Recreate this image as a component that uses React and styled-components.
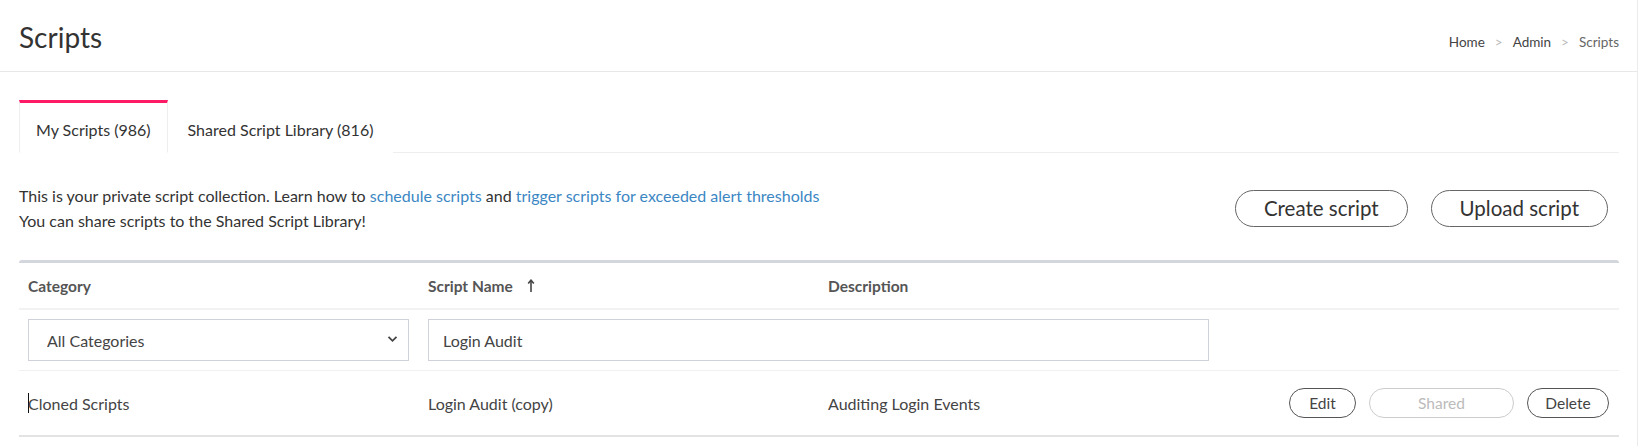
import React from 'react';
import styled, { createGlobalStyle } from 'styled-components';

const GlobalStyle = createGlobalStyle`
  body {
    margin: 0;
    background: #fff;
    font-family: Lato, "Open Sans", Arial, sans-serif;
    color: #333;
  }
`;

const Page = styled.div`
  width: 1637px;
  min-height: 446px;
  border-right: 1px solid #ececec;
`;

const Header = styled.header`
  height: 72px;
  display: flex;
  align-items: center;
  justify-content: space-between;
  padding: 0 18px 0 19px;
  border-bottom: 1px solid #e8e8e8;
  box-sizing: border-box;
`;

const Title = styled.h1`
  margin: 0;
  font-size: 28px;
  font-weight: 400;
  color: #333;
  padding-top: 3px;
`;

const Breadcrumb = styled.nav`
  display: flex;
  align-items: center;
  font-size: 13.5px;
  color: #444;
  padding-top: 12px;
`;

const Crumb = styled.span`
  color: ${(p) => (p.$current ? '#666' : '#444')};
`;

const Sep = styled.span`
  color: #bbb;
  margin: 0 10px;
`;

const Content = styled.main`
  padding: 28px 18px 0 19px;
`;

const TabBar = styled.div`
  display: flex;
  align-items: flex-end;
  border-bottom: 1px solid #eee;
`;

const Tab = styled.button`
  height: 53px;
  box-sizing: border-box;
  padding: 4px ${(p) => (p.$active ? '16px' : '19px')} 0;
  margin-bottom: -1px;
  border: 1px solid ${(p) => (p.$active ? '#eee' : 'transparent')};
  border-top: 3px solid ${(p) => (p.$active ? '#ff1a66' : 'transparent')};
  border-bottom: 1px solid ${(p) => (p.$active ? '#fff' : 'transparent')};
  background: #fff;
  font-family: inherit;
  font-size: 16px;
  color: #333;
  cursor: pointer;
`;

const Intro = styled.div`
  display: flex;
  align-items: center;
  justify-content: space-between;
  padding: 30px 11px 27px 0;
`;

const IntroText = styled.p`
  margin: 0;
  font-size: 16px;
  line-height: 25px;
  color: #333;
`;

const Link = styled.a`
  color: #3b87c4;
  text-decoration: none;
`;

const Toolbar = styled.div`
  display: flex;
  gap: 23px;
`;

const PillButton = styled.button`
  height: 37px;
  padding: 0 28px;
  border: 1px solid #666;
  border-radius: 19px;
  background: #fff;
  font-family: inherit;
  font-size: 20.5px;
  color: #333;
  cursor: pointer;
`;

const Table = styled.div`
  border-top: 3px solid #d3d6dd;
  border-radius: 3px 3px 0 0;
`;

const Row = styled.div`
  display: grid;
  grid-template-columns: repeat(4, 1fr);
  align-items: center;
  height: ${(p) => p.$h}px;
  border-bottom: ${(p) => p.$border};
`;

const HeadCell = styled.div`
  padding: 0 10px 0 9px;
  font-size: 15.5px;
  font-weight: 700;
  color: #555;
  display: flex;
  align-items: center;
  gap: 14px;
`;

const Cell = styled.div`
  padding: 0 10px 0 9px;
  font-size: 16px;
  color: #444;
  grid-column: ${(p) => p.$span || 'auto'};
  display: flex;
  align-items: center;
`;

const Actions = styled(Cell)`
  justify-content: flex-end;
  gap: 13px;
`;

const SelectWrap = styled.div`
  position: relative;
  width: 100%;
`;

const Select = styled.select`
  width: 100%;
  height: 42px;
  appearance: none;
  border: 1px solid #cfd2da;
  background: #fff;
  padding: 0 40px 0 18px;
  font-family: inherit;
  font-size: 16px;
  color: #444;
  border-radius: 0;
`;

const Chevron = styled.svg`
  position: absolute;
  right: 11px;
  top: 16px;
  pointer-events: none;
`;

const Input = styled.input`
  width: 100%;
  height: 42px;
  box-sizing: border-box;
  border: 1px solid #cfd2da;
  padding: 0 14px;
  font-family: inherit;
  font-size: 16px;
  color: #444;
  outline: none;
`;

const SmallButton = styled.button`
  height: 30px;
  min-width: ${(p) => p.$w}px;
  padding: 0 14px;
  border: 1px solid ${(p) => (p.disabled ? '#ccc' : '#555')};
  border-radius: 15px;
  background: #fff;
  font-family: inherit;
  font-size: 15.5px;
  color: ${(p) => (p.disabled ? '#bbb' : '#444')};
  cursor: ${(p) => (p.disabled ? 'default' : 'pointer')};
`;

const Caret = styled.span`
  display: inline-block;
  width: 1px;
  height: 20px;
  background: #111;
  margin-right: -1px;
`;

const SortArrow = () => (
  <svg width="8" height="14" viewBox="0 0 8 14">
    <path d="M4 13V2" stroke="#444" strokeWidth="1.6" fill="none" />
    <path d="M1.2 4.6L4 1.2l2.8 3.4" stroke="#444" strokeWidth="1.6" fill="none" />
  </svg>
);

const App = () => {
  return (
    <>
      <GlobalStyle />
      <Page>
        <Header>
          <Title>Scripts</Title>
          <Breadcrumb>
            <Crumb>Home</Crumb>
            <Sep>&gt;</Sep>
            <Crumb>Admin</Crumb>
            <Sep>&gt;</Sep>
            <Crumb $current>Scripts</Crumb>
          </Breadcrumb>
        </Header>
        <Content>
          <TabBar>
            <Tab $active>My Scripts (986)</Tab>
            <Tab>Shared Script Library (816)</Tab>
          </TabBar>
          <Intro>
            <IntroText>
              This is your private script collection. Learn how to{' '}
              <Link href="#">schedule scripts</Link> and{' '}
              <Link href="#">trigger scripts for exceeded alert thresholds</Link>
              <br />
              You can share scripts to the Shared Script Library!
            </IntroText>
            <Toolbar>
              <PillButton>Create script</PillButton>
              <PillButton>Upload script</PillButton>
            </Toolbar>
          </Intro>
          <Table>
            <Row $h={45} $border="2px solid #f2f2f2">
              <HeadCell>Category</HeadCell>
              <HeadCell>
                Script Name <SortArrow />
              </HeadCell>
              <HeadCell>Description</HeadCell>
              <HeadCell />
            </Row>
            <Row $h={60} $border="1px solid #f0f0f0">
              <Cell>
                <SelectWrap>
                  <Select defaultValue="all">
                    <option value="all">All Categories</option>
                  </Select>
                  <Chevron width="11" height="8" viewBox="0 0 11 8">
                    <path d="M1.5 1.8l4 4 4-4" stroke="#444" strokeWidth="1.8" fill="none" />
                  </Chevron>
                </SelectWrap>
              </Cell>
              <Cell $span="span 2">
                <Input defaultValue="Login Audit" />
              </Cell>
              <Cell />
            </Row>
            <Row $h={64} $border="2px solid #e3e3e3">
              <Cell>
                <Caret />
                Cloned Scripts
              </Cell>
              <Cell>Login Audit (copy)</Cell>
              <Cell>Auditing Login Events</Cell>
              <Actions>
                <SmallButton $w={67}>Edit</SmallButton>
                <SmallButton $w={145} disabled>
                  Shared
                </SmallButton>
                <SmallButton $w={82}>Delete</SmallButton>
              </Actions>
            </Row>
          </Table>
        </Content>
      </Page>
    </>
  );
};

export default App;
